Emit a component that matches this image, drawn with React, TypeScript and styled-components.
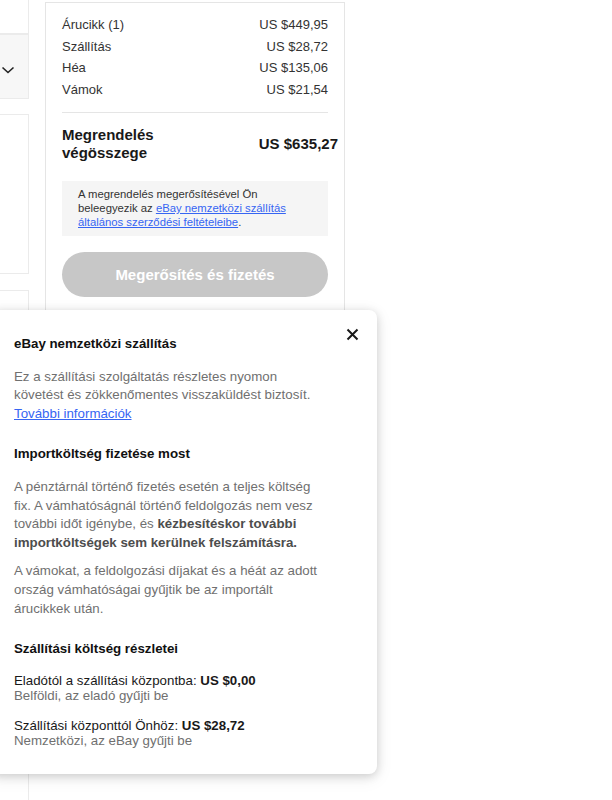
import styled, { createGlobalStyle } from "styled-components";

const GlobalStyle = createGlobalStyle`
  html, body {
    margin: 0;
    padding: 0;
    background: #fff;
    font-family: "Liberation Sans", Arial, sans-serif;
    color: #191919;
    overflow: hidden;
  }
`;

const Page = styled.div`
  position: relative;
  width: 612px;
  height: 800px;
  display: flex;
  align-items: flex-start;
  gap: 16px;
`;

const LeftColumn = styled.div`
  width: 29px;
  display: flex;
  flex-direction: column;
`;

const SideBox = styled.div<{ $height: number; $gap?: number; $grey?: boolean }>`
  height: ${(p) => p.$height}px;
  margin-top: ${(p) => p.$gap ?? 0}px;
  box-sizing: border-box;
  border: 1px solid #ebebeb;
  border-left: none;
  background: ${(p) => (p.$grey ? "#f7f7f7" : "#fff")};
  display: flex;
  align-items: center;
`;

const Chevron = styled.svg`
  margin: 6px 0 0 1px;
`;

const SummaryCard = styled.div`
  margin-top: 2px;
  width: 300px;
  min-height: 700px;
  box-sizing: border-box;
  border: 1px solid #e5e5e5;
  padding: 11px 16px;
  font-size: 13px;
  color: #333;
`;

const Row = styled.div`
  display: flex;
  justify-content: space-between;
  line-height: 21.5px;
`;

const Divider = styled.hr`
  border: none;
  border-top: 1px solid #e5e5e5;
  margin: 12px 0 13px;
`;

const TotalRow = styled.div`
  display: flex;
  justify-content: space-between;
  align-items: center;
  margin-right: -10px;
  font-size: 15px;
  font-weight: 700;
  line-height: 18px;
  color: #191919;
`;

const TotalLabel = styled.div`
  max-width: 120px;
`;

const Notice = styled.div`
  margin-top: 19px;
  background: #f5f5f5;
  padding: 6px 42px 7px 16px;
  font-size: 11.3px;
  line-height: 14px;
  color: #333;
`;

const Link = styled.a`
  color: #3665f3;
  text-decoration: underline;
`;

const PayButton = styled.button`
  margin-top: 16px;
  width: 100%;
  height: 45px;
  border: none;
  border-radius: 23px;
  background: #c7c7c7;
  color: #fff;
  font-family: inherit;
  font-size: 15px;
  font-weight: 700;
`;

const Popup = styled.div`
  position: absolute;
  left: -10px;
  top: 310px;
  width: 387px;
  box-sizing: border-box;
  padding: 25px 53px 25px 24px;
  background: #fff;
  border-radius: 8px;
  box-shadow: 0 2px 10px rgba(0, 0, 0, 0.16), 0 4px 18px rgba(0, 0, 0, 0.08);
  font-size: 13.3px;
  line-height: 18.6px;
`;

const CloseButton = styled.button`
  position: absolute;
  top: 12px;
  right: 13px;
  width: 24px;
  height: 24px;
  padding: 0;
  border: none;
  background: none;
  display: flex;
  align-items: center;
  justify-content: center;
`;

const Section = styled.section`
  & + & {
    margin-top: 22px;
  }
`;

const Heading = styled.h3`
  margin: 0 0 14px;
  font-size: 13.3px;
  font-weight: 700;
  color: #111;
`;

const Para = styled.p`
  margin: 0;
  color: #707070;

  & + & {
    margin-top: 10px;
  }

  b {
    color: #4d4d4d;
  }
`;

const Detail = styled.div`
  line-height: 15.5px;

  & + & {
    margin-top: 14px;
  }
`;

const DetailMain = styled.div`
  color: #191919;
`;

const DetailSub = styled.div`
  color: #707070;
`;

const lines = [
  ["Árucikk (1)", "US $449,95"],
  ["Szállítás", "US $28,72"],
  ["Héa", "US $135,06"],
  ["Vámok", "US $21,54"],
];

export default function App() {
  return (
    <>
      <GlobalStyle />
      <Page>
        <LeftColumn>
          <SideBox $height={34} style={{ borderTop: "none" }} />
          <SideBox $height={65} $grey>
            <Chevron width="14" height="8" viewBox="0 0 14 8">
              <polyline points="1.5,1.5 7,6.5 12.5,1.5" fill="none" stroke="#222" strokeWidth="1.6" />
            </Chevron>
          </SideBox>
          <SideBox $height={160} $gap={15} />
          <SideBox $height={540} $gap={16} />
        </LeftColumn>

        <SummaryCard>
          {lines.map(([label, value]) => (
            <Row key={label}>
              <span>{label}</span>
              <span>{value}</span>
            </Row>
          ))}
          <Divider />
          <TotalRow>
            <TotalLabel>Megrendelés végösszege</TotalLabel>
            <span>US $635,27</span>
          </TotalRow>
          <Notice>
            A megrendelés megerősítésével Ön beleegyezik az{" "}
            <Link href="#">eBay nemzetközi szállítás általános szerződési feltételeibe</Link>.
          </Notice>
          <PayButton disabled>Megerősítés és fizetés</PayButton>
        </SummaryCard>

        <Popup>
          <CloseButton aria-label="Bezárás">
            <svg width="13" height="13" viewBox="0 0 13 13">
              <path d="M1.5 1.5 L11.5 11.5 M11.5 1.5 L1.5 11.5" stroke="#191919" strokeWidth="2" />
            </svg>
          </CloseButton>

          <Section>
            <Heading>eBay nemzetközi szállítás</Heading>
            <Para>
              Ez a szállítási szolgáltatás részletes nyomon követést és zökkenőmentes visszaküldést
              biztosít. <Link href="#">További információk</Link>
            </Para>
          </Section>

          <Section>
            <Heading>Importköltség fizetése most</Heading>
            <Para>
              A pénztárnál történő fizetés esetén a teljes költség fix. A vámhatóságnál történő
              feldolgozás nem vesz további időt igénybe, és{" "}
              <b>kézbesítéskor további importköltségek sem kerülnek felszámításra.</b>
            </Para>
            <Para>
              A vámokat, a feldolgozási díjakat és a héát az adott ország vámhatóságai gyűjtik be
              az importált árucikkek után.
            </Para>
          </Section>

          <Section>
            <Heading>Szállítási költség részletei</Heading>
            <Detail>
              <DetailMain>
                Eladótól a szállítási központba: <b>US $0,00</b>
              </DetailMain>
              <DetailSub>Belföldi, az eladó gyűjti be</DetailSub>
            </Detail>
            <Detail>
              <DetailMain>
                Szállítási központtól Önhöz: <b>US $28,72</b>
              </DetailMain>
              <DetailSub>Nemzetközi, az eBay gyűjti be</DetailSub>
            </Detail>
          </Section>
        </Popup>
      </Page>
    </>
  );
}
